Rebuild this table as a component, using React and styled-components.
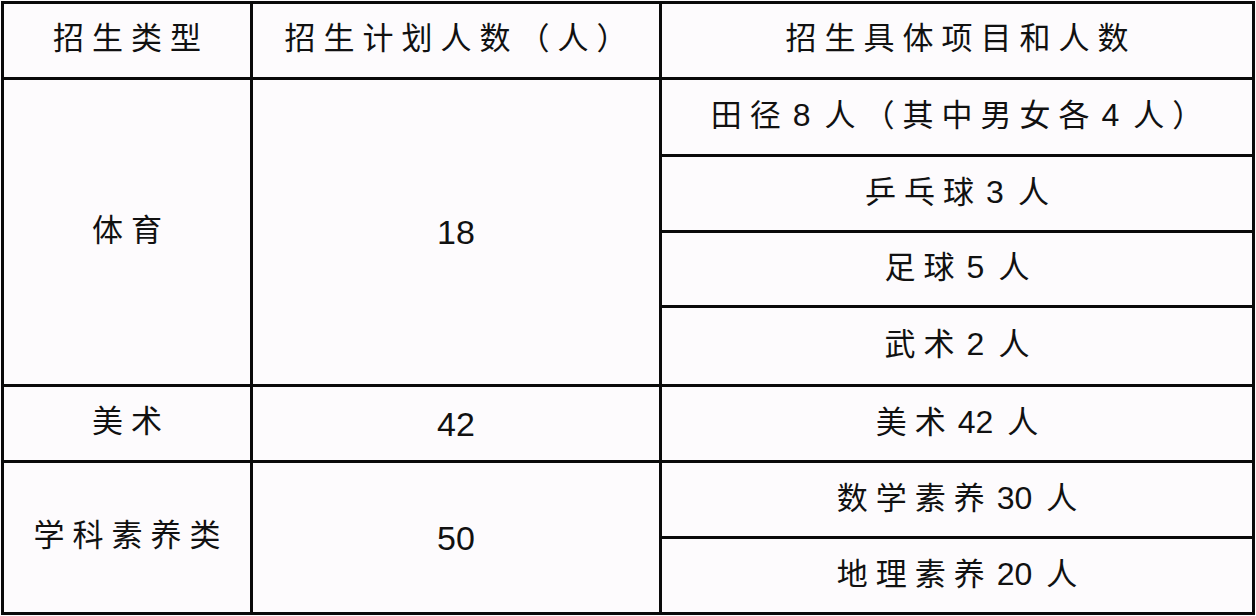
import styled, { createGlobalStyle } from 'styled-components'

const GlobalStyle = createGlobalStyle`
  html, body {
    margin: 0;
    padding: 0;
    background: #fdfbfd;
  }
`

const Page = styled.div`
  padding: 1px 0 0 1px;
  font-family: "Liberation Sans", "Noto Sans CJK SC", sans-serif;
  color: #111;
`

const Table = styled.table`
  border-collapse: separate;
  border-spacing: 0;
  border-top: 3px solid #0a0a0a;
  border-left: 3px solid #0a0a0a;
  table-layout: fixed;
  background: #fdfbfd;
`

const Row = styled.tr`
  height: ${(p) => p.h}px;
`

const Cell = styled.td`
  border-right: 3px solid #0a0a0a;
  border-bottom: 3px solid #0a0a0a;
  padding: 0 0 4px 8px;
  text-align: center;
  vertical-align: middle;
  font-size: 31px;
  letter-spacing: 8px;
  line-height: 1;
  white-space: nowrap;
`

const Count = styled(Cell)`
  font-size: 34px;
  letter-spacing: 0;
  padding: 0;
`

const Num = styled.span`
  font-size: 32px;
  letter-spacing: 0;
  margin: 0 14px 0 4px;
`

const Item = ({ parts }) => (
  <>
    {parts.map((p, i) => (i % 2 === 1 ? <Num key={i}>{p}</Num> : <span key={i}>{p}</span>))}
  </>
)

export default function App() {
  return (
    <Page>
      <GlobalStyle />
      <Table>
        <colgroup>
          <col style={{ width: 249 }} />
          <col style={{ width: 409 }} />
          <col style={{ width: 593 }} />
        </colgroup>
        <tbody>
          <Row h={76}>
            <Cell>招生类型</Cell>
            <Cell>招生计划人数（人）</Cell>
            <Cell>招生具体项目和人数</Cell>
          </Row>
          <Row h={77}>
            <Cell rowSpan={4}>体育</Cell>
            <Count rowSpan={4}>18</Count>
            <Cell><Item parts={['田径', '8', '人（其中男女各', '4', '人）']} /></Cell>
          </Row>
          <Row h={76}>
            <Cell><Item parts={['乒乓球', '3', '人']} /></Cell>
          </Row>
          <Row h={75}>
            <Cell><Item parts={['足球', '5', '人']} /></Cell>
          </Row>
          <Row h={79}>
            <Cell><Item parts={['武术', '2', '人']} /></Cell>
          </Row>
          <Row h={76}>
            <Cell>美术</Cell>
            <Count>42</Count>
            <Cell><Item parts={['美术', '42', '人']} /></Cell>
          </Row>
          <Row h={76}>
            <Cell rowSpan={2}>学科素养类</Cell>
            <Count rowSpan={2}>50</Count>
            <Cell><Item parts={['数学素养', '30', '人']} /></Cell>
          </Row>
          <Row h={76}>
            <Cell><Item parts={['地理素养', '20', '人']} /></Cell>
          </Row>
        </tbody>
      </Table>
    </Page>
  )
}
